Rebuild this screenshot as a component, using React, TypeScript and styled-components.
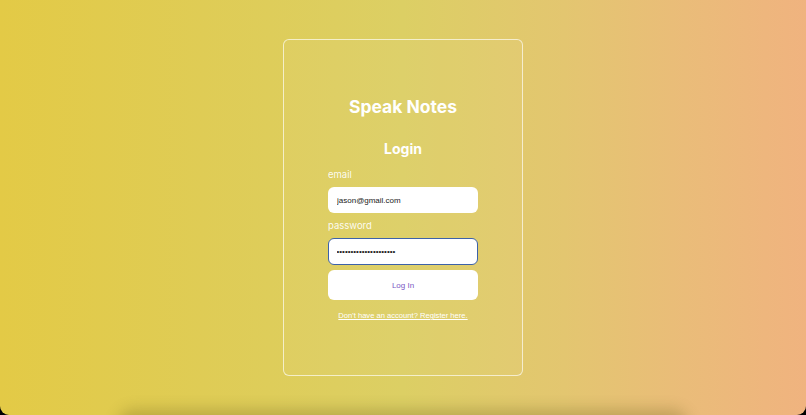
import React from "react";
import styled, { createGlobalStyle } from "styled-components";

const Global = createGlobalStyle`
  html, body { margin: 0; padding: 0; background: #000; }
  body { font-family: Inter, "Noto Sans", sans-serif; }
  * { box-sizing: border-box; }
`;

const Page = styled.div`
  position: relative;
  width: 806px;
  height: 415px;
  overflow: hidden;
  border-radius: 0 0 9px 9px;
  background: linear-gradient(
    to right,
    #e3ca46 0%,
    #dfcc55 25%,
    #dccf64 50%,
    #e3c670 70%,
    #eabc79 85%,
    #f0b37f 100%
  );
  display: flex;
  align-items: center;
  justify-content: center;
`;

const BottomShadow = styled.div`
  position: absolute;
  left: 120px;
  right: 120px;
  bottom: -30px;
  height: 30px;
  border-radius: 40px;
  box-shadow: 0 -3px 14px 3px rgba(110, 95, 30, 0.3);
`;

const Card = styled.div`
  width: 240px;
  height: 337px;
  border: 1px solid rgba(255, 255, 255, 0.65);
  border-radius: 6px;
  background: rgba(255, 255, 255, 0.04);
  display: flex;
  flex-direction: column;
  align-items: center;
  padding-top: 56px;
`;

const Title = styled.h1`
  margin: 0;
  font-size: 17.5px;
  line-height: 22px;
  font-weight: 700;
  color: #fff;
`;

const Subtitle = styled.h2`
  margin: 22px 0 0;
  font-size: 14px;
  line-height: 18px;
  font-weight: 700;
  color: #fff;
`;

const Form = styled.form`
  width: 150px;
  display: flex;
  flex-direction: column;
  margin-top: 11px;
`;

const Label = styled.label<{ $gap?: number }>`
  font-size: 9.5px;
  line-height: 12px;
  color: rgba(255, 255, 255, 0.92);
  margin-top: ${(p) => p.$gap ?? 0}px;
  margin-bottom: 6px;
`;

const Input = styled.input<{ $focused?: boolean }>`
  width: 150px;
  height: ${(p) => (p.$focused ? 27 : 26)}px;
  border-radius: 6px;
  border: ${(p) => (p.$focused ? "1.5px solid #3d62a8" : "none")};
  background: #fff;
  padding: 0 ${(p) => (p.$focused ? 7.5 : 9)}px;
  font-family: "Liberation Sans", Arial, sans-serif;
  font-size: 8px;
  color: #222;
  outline: none;
  caret-color: #222;
`;

const Button = styled.button`
  margin-top: 5px;
  width: 150px;
  height: 30px;
  border: none;
  border-radius: 6px;
  background: #fff;
  color: #7a58c4;
  font-family: "Liberation Sans", Arial, sans-serif;
  font-size: 8px;
  cursor: pointer;
`;

const RegisterLink = styled.a`
  margin-top: 11px;
  font-family: "Liberation Sans", Arial, sans-serif;
  font-size: 7.6px;
  line-height: 10px;
  color: #fff;
  text-decoration: underline;
  text-align: center;
`;

export default function App() {
  return (
    <>
      <Global />
      <Page>
        <Card>
          <Title>Speak Notes</Title>
          <Subtitle>Login</Subtitle>
          <Form onSubmit={(e) => e.preventDefault()}>
            <Label>email</Label>
            <Input type="email" defaultValue="jason@gmail.com" />
            <Label $gap={7}>password</Label>
            <Input $focused type="password" defaultValue="jasonpassword12345678" autoFocus />
            <Button type="submit">Log In</Button>
          </Form>
          <RegisterLink href="#">Don't have an account? Register here.</RegisterLink>
        </Card>
        <BottomShadow />
      </Page>
    </>
  );
}
